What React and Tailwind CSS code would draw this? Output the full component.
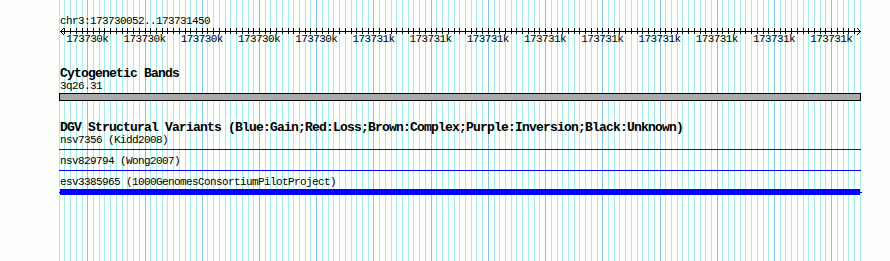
import React from "react";

const X0 = 58.7;
const STEP = 5.722;

function Grid() {
  const lines = [];
  for (let k = 0; k <= 140; k++) {
    const x = Math.round(X0 + k * STEP) + 0.5;
    const major = k % 10 === 5;
    lines.push(
      <line key={"g" + k} x1={x} y1={0} x2={x} y2={261} stroke={major ? "#84c6e8" : "#a6ecec"} strokeWidth={1} />
    );
  }
  const ticks = [];
  for (let k = 1; k < 140; k++) {
    const x = Math.round(X0 + k * STEP) + 0.5;
    ticks.push(<line key={"t" + k} x1={x} y1={28} x2={x} y2={34} stroke="#000" strokeWidth={1} />);
  }
  return (
    <svg className="absolute inset-0" width="890" height="261" shapeRendering="crispEdges">
      {lines}
      <line x1={60} y1={31.5} x2={861} y2={31.5} stroke="#000" strokeWidth={1} />
      {ticks}
      <polyline points="64,28 60.5,31.5 64,35" fill="none" stroke="#000" strokeWidth={1} />
      <polyline points="857,28 860.5,31.5 857,35" fill="none" stroke="#000" strokeWidth={1} />
    </svg>
  );
}

const labels = [
  "173730k", "173730k", "173730k", "173730k", "173730k",
  "173731k", "173731k", "173731k", "173731k", "173731k",
  "173731k", "173731k", "173731k", "173731k",
];

export default function App() {
  const small = "text-[11px] leading-[13px] tracking-[-0.6px] text-black";
  const bold = "text-[13px] leading-[12px] tracking-[-0.8px] font-bold text-black";
  return (
    <div
      className="relative w-[890px] h-[261px] bg-[#fcfefc] overflow-hidden"
      style={{ fontFamily: "'Liberation Mono', 'DejaVu Sans Mono', monospace" }}
    >
      <Grid />
      <div className="relative flex flex-col pt-[15px]">
        <div className={`${small} pl-[60px] whitespace-nowrap`}>chr3:173730052..173731450</div>
        <div className="h-[5px]" />
        <div className="flex pl-[58.7px]">
          {labels.map((l, i) => (
            <div key={i} className={`${small} w-[57.22px] shrink-0 text-center whitespace-nowrap`}>
              {l}
            </div>
          ))}
        </div>
        <div className={`${bold} mt-[22px] pl-[60px] whitespace-nowrap`}>Cytogenetic Bands</div>
        <div className={`${small} pl-[60px] whitespace-nowrap`}>3q26.31</div>
        <div className="ml-[59px] w-[802px] h-[8px] border border-black bg-[#aaaaaa]" />
        <div className={`${bold} mt-[21px] pl-[60px] whitespace-nowrap`}>
          DGV Structural Variants (Blue:Gain;Red:Loss;Brown:Complex;Purple:Inversion;Black:Unknown)
        </div>
        <div className={`${small} pl-[60px] whitespace-nowrap`}>nsv7356 (Kidd2008)</div>
        <div className="mt-[2px] ml-[59px] w-[802px] h-[1px] bg-[#400068]" />
        <div className={`${small} mt-[5px] pl-[60px] whitespace-nowrap`}>nsv829794 (Wong2007)</div>
        <div className="mt-[2px] ml-[59px] w-[802px] h-[1px] bg-[#0000ff]" />
        <div className={`${small} mt-[5px] pl-[60px] whitespace-nowrap`}>
          esv3385965 (1000GenomesConsortiumPilotProject)
        </div>
        <div className="ml-[59px] flex items-center">
          <div className="w-[1px] h-[1px] bg-[#0000ff]" />
          <div className="w-[800px] h-[6px] bg-[#0000ff]" />
          <div className="w-[2px] h-[1px] bg-[#0000ff]" />
        </div>
      </div>
    </div>
  );
}
